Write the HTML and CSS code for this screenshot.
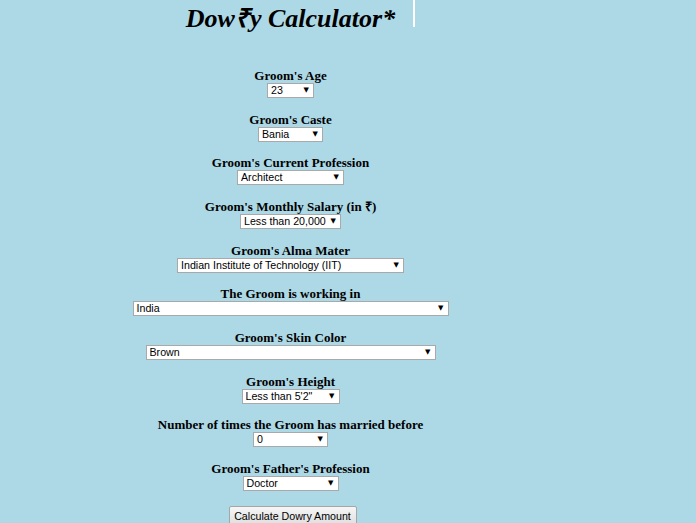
FILE: index.html
```html
<!DOCTYPE html>
<html>
<head>
<meta charset="utf-8">
<link rel="stylesheet" href="styles.css">
</head>
<body>
<div class="page">
  <header class="head">
    <span></span>
    <h1 class="title">Dow₹y Calculator*</h1>
    <span class="rule-wrap"><span class="vline"></span></span>
  </header>
  <form class="form">
    <div class="field">
      <b class="label">Groom's Age</b>
      <span class="sel" style="width:47px"><select><option>23</option></select></span>
    </div>
    <div class="field">
      <b class="label">Groom's Caste</b>
      <span class="sel" style="width:65px"><select><option>Bania</option></select></span>
    </div>
    <div class="field">
      <b class="label">Groom's Current Profession</b>
      <span class="sel" style="width:107px"><select><option>Architect</option></select></span>
    </div>
    <div class="field">
      <b class="label">Groom's Monthly Salary (in ₹)</b>
      <span class="sel" style="width:101px"><select><option>Less than 20,000</option></select></span>
    </div>
    <div class="field">
      <b class="label">Groom's Alma Mater</b>
      <span class="sel" style="width:227px"><select><option>Indian Institute of Technology (IIT)</option></select></span>
    </div>
    <div class="field">
      <b class="label">The Groom is working in</b>
      <span class="sel" style="width:316px"><select><option>India</option></select></span>
    </div>
    <div class="field">
      <b class="label">Groom's Skin Color</b>
      <span class="sel" style="width:290px"><select><option>Brown</option></select></span>
    </div>
    <div class="field">
      <b class="label">Groom's Height</b>
      <span class="sel" style="width:98px"><select><option>Less than 5'2"</option></select></span>
    </div>
    <div class="field">
      <b class="label">Number of times the Groom has married before</b>
      <span class="sel" style="width:75px"><select><option>0</option></select></span>
    </div>
    <div class="field">
      <b class="label">Groom's Father's Profession</b>
      <span class="sel" style="width:96px"><select><option>Doctor</option></select></span>
    </div>
    <div class="actions">
      <button type="button" class="btn">Calculate Dowry Amount</button>
    </div>
  </form>
</div>
</body>
</html>
```

FILE: styles.css
```css
html, body {
  margin: 0;
  padding: 0;
}
body {
  background: #add8e6;
  color: #000;
  font-family: "Liberation Serif", "Times New Roman", serif;
  overflow: hidden;
}
.page {
  width: 565px;
  margin-left: 8px;
}
.head {
  display: grid;
  grid-template-columns: 1fr auto 1fr;
  height: 40px;
}
.title {
  margin: 0;
  padding-top: 4px;
  font-size: 26px;
  font-weight: bold;
  font-style: italic;
  line-height: 30px;
  white-space: nowrap;
}
.rule-wrap {
  display: block;
  padding-left: 18px;
}
.vline {
  display: block;
  width: 2px;
  height: 27px;
  background: #fff;
}
.form {
  display: flex;
  flex-direction: column;
  align-items: center;
  padding-top: 28px;
}
.field {
  display: flex;
  flex-direction: column;
  align-items: center;
  height: 43.67px;
}
.label {
  display: block;
  font-size: 13px;
  line-height: 15px;
  white-space: nowrap;
}
.sel {
  position: relative;
  display: block;
  height: 15px;
}
.sel select {
  appearance: none;
  -webkit-appearance: none;
  display: block;
  width: 100%;
  height: 15px;
  margin: 0;
  padding: 0 10px 0 3px;
  border: 1px solid #a9a9a9;
  border-radius: 0;
  background: #fff;
  color: #000;
  font-family: "Liberation Sans", Arial, sans-serif;
  font-size: 10.67px;
  line-height: 13px;
  box-sizing: border-box;
}
.sel::after {
  content: "▼";
  position: absolute;
  right: 5px;
  top: 3px;
  font-family: "DejaVu Sans", sans-serif;
  font-size: 7px;
  line-height: 8px;
  color: #000;
  pointer-events: none;
}
.actions {
  margin-top: 1px;
  margin-left: 4px;
}
.btn {
  display: block;
  width: 128px;
  height: 20px;
  padding: 0 4px;
  border: 1px solid #a6a6a6;
  border-radius: 2px;
  background: linear-gradient(#f6f6f6, #dedede);
  color: #000;
  font-family: "Liberation Sans", Arial, sans-serif;
  font-size: 10.67px;
  line-height: 18px;
  white-space: nowrap;
}
```
